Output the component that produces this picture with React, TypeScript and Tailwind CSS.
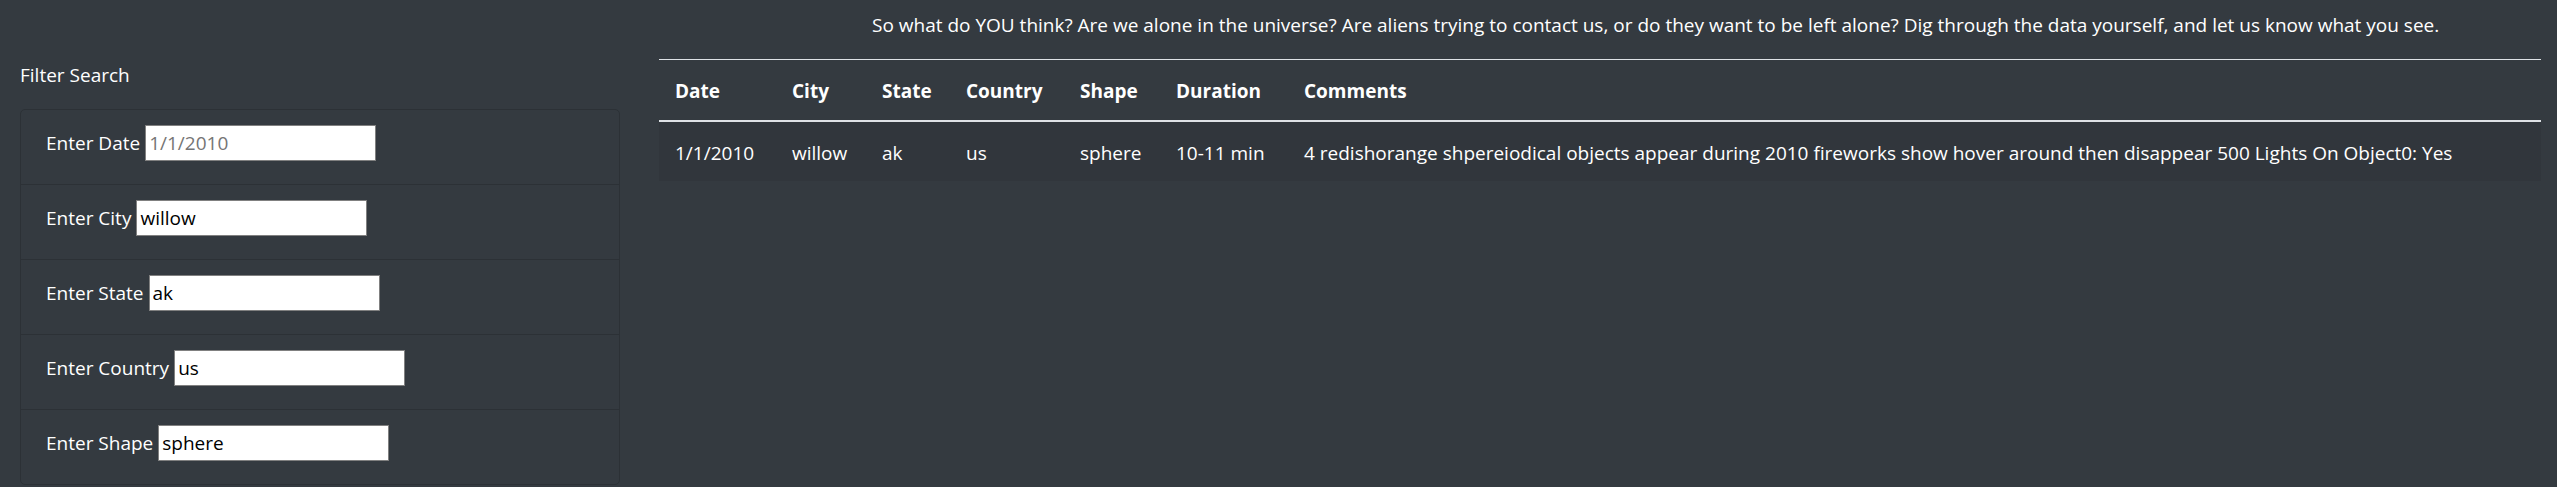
import React from 'react';

interface Filter {
  label: string;
  value?: string;
  placeholder?: string;
}

const filters: Filter[] = [
  { label: 'Enter Date', placeholder: '1/1/2010' },
  { label: 'Enter City', value: 'willow' },
  { label: 'Enter State', value: 'ak' },
  { label: 'Enter Country', value: 'us' },
  { label: 'Enter Shape', value: 'sphere' },
];

const columns = [
  { title: 'Date', width: 'w-[117px]' },
  { title: 'City', width: 'w-[90px]' },
  { title: 'State', width: 'w-[84px]' },
  { title: 'Country', width: 'w-[114px]' },
  { title: 'Shape', width: 'w-[96px]' },
  { title: 'Duration', width: 'w-[128px]' },
  { title: 'Comments', width: '' },
];

const rows = [
  [
    '1/1/2010',
    'willow',
    'ak',
    'us',
    'sphere',
    '10-11 min',
    '4 redishorange shpereiodical objects appear during 2010 fireworks show hover around then disappear 500 Lights On Object0: Yes',
  ],
];

export default function App() {
  return (
    <div className="min-h-screen w-full bg-[#343a40] text-white font-['Open_Sans','Noto_Sans',sans-serif] text-[19px] leading-[28px] flex">
      {/* Filters */}
      <aside className="w-[659px] shrink-0 pl-[20px] pr-[39px]">
        <div className="mt-[61px] mb-[20px]">Filter Search</div>
        <div className="border border-[#2c3136] rounded-[5px]">
          {filters.map((f, i) => (
            <div
              key={f.label}
              className={
                i === 0
                  ? 'h-[74px] pt-[15px] px-[25px] flex items-baseline gap-[5px]'
                  : 'h-[75px] pt-[15px] px-[25px] flex items-baseline gap-[5px] border-t border-[#2c3136]'
              }
            >
              <label>{f.label}</label>
              <input
                type="text"
                defaultValue={f.value}
                placeholder={f.placeholder}
                className="w-[231px] h-[36px] bg-white border border-[#808080] pl-[3px] text-black placeholder:text-[#757575] outline-none"
              />
            </div>
          ))}
        </div>
      </aside>

      {/* Results */}
      <main className="flex-1 pr-[16px]">
        <p className="h-[59px] pt-[11px] pl-[213px] whitespace-nowrap">
          So what do YOU think? Are we alone in the universe? Are aliens trying to contact us, or do they want to be left alone? Dig through the data yourself, and let us know what you see.
        </p>
        <table className="w-full table-fixed border-separate border-spacing-0 text-left">
          <thead>
            <tr>
              {columns.map((c) => (
                <th
                  key={c.title}
                  className={`${c.width} px-[16px] pt-[17px] pb-[15px] border-t border-b-2 border-[#dee2e6] font-bold`}
                >
                  {c.title}
                </th>
              ))}
            </tr>
          </thead>
          <tbody>
            {rows.map((r, i) => (
              <tr key={i} className="bg-[#31363c]">
                {r.map((cell, j) => (
                  <td key={j} className="px-[16px] pt-[17px] pb-[14px] whitespace-nowrap">
                    {cell}
                  </td>
                ))}
              </tr>
            ))}
          </tbody>
        </table>
      </main>
    </div>
  );
}
